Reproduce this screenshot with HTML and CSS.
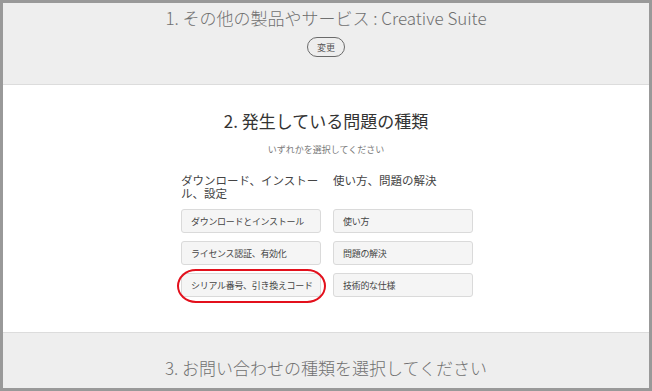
FILE: index.html
```html
<!DOCTYPE html>
<html lang="ja">
<head>
  <meta charset="UTF-8">
  <meta name="viewport" content="width=device-width, initial-scale=1.0">
  <title>お問い合わせ</title>
  <link rel="stylesheet" href="styles.css">
</head>
<body>
  <div class="frame">
    <!-- Step 1 -->
    <section class="step step-done">
      <h2 class="step-title light">1. その他の製品やサービス : Creative Suite</h2>
      <button type="button" class="change-btn">変更</button>
    </section>

    <!-- Step 2 -->
    <section class="step step-active">
      <h2 class="step-title">2. 発生している問題の種類</h2>
      <p class="hint">いずれかを選択してください</p>
      <div class="columns">
        <div class="column">
          <h3>ダウンロード、インストール、設定</h3>
          <button type="button" class="option">ダウンロードとインストール</button>
          <button type="button" class="option">ライセンス認証、有効化</button>
          <button type="button" class="option marked">シリアル番号、引き換えコード</button>
        </div>
        <div class="column">
          <h3>使い方、問題の解決</h3>
          <button type="button" class="option">使い方</button>
          <button type="button" class="option">問題の解決</button>
          <button type="button" class="option">技術的な仕様</button>
        </div>
      </div>
    </section>

    <!-- Step 3 -->
    <section class="step step-next">
      <h2 class="step-title light">3. お問い合わせの種類を選択してください</h2>
    </section>
  </div>
</body>
</html>
```

FILE: styles.css
```css
* {
  box-sizing: border-box;
}
body {
  margin: 0;
  font-family: "Noto Sans CJK JP", "Noto Sans", sans-serif;
  color: #333;
}
.frame {
  width: 652px;
  height: 391px;
  border: 3px solid #999;
  display: flex;
  flex-direction: column;
  overflow: hidden;
}
.step {
  text-align: center;
}
.step-title {
  margin: 0;
  font-size: 17px;
  line-height: 24px;
  font-weight: 400;
  color: #333;
}
.step-title.light {
  color: #707070;
  font-weight: 300;
}
.step-done {
  background-color: #eeeeee;
  height: 82px;
  padding-top: 3px;
  border-bottom: 1px solid #dcdcdc;
}
.change-btn {
  display: block;
  margin: 7px auto 0;
  height: 20px;
  width: 38px;
  padding: 0;
  border: 1.5px solid #6a6a6a;
  border-radius: 10px;
  background: transparent;
  font-family: inherit;
  font-size: 9px;
  color: #555;
}
.step-active {
  background-color: #fff;
  height: 247px;
  padding-top: 24px;
}
.hint {
  margin: 10px 0 0;
  font-size: 9px;
  line-height: 14px;
  color: #7a7a7a;
}
.columns {
  display: grid;
  grid-template-columns: 140px 140px;
  column-gap: 12px;
  justify-content: center;
  margin-top: 17px;
  transform: translateX(1px);
}
.column {
  display: flex;
  flex-direction: column;
  gap: 8px;
  text-align: left;
}
.column h3 {
  margin: 0 0 1px;
  height: 26px;
  font-size: 11.5px;
  line-height: 13px;
  font-weight: 400;
  color: #444;
}
.option {
  position: relative;
  height: 24px;
  padding: 0 9px;
  text-align: left;
  white-space: nowrap;
  background-color: #f5f5f5;
  border: 1px solid #dadada;
  border-radius: 3px;
  font-family: inherit;
  font-size: 9px;
  letter-spacing: -0.3px;
  color: #444;
}
.option.marked::after {
  content: "";
  position: absolute;
  left: -5px;
  right: -6px;
  top: -5px;
  bottom: -7px;
  border: 2px solid #e3101c;
  border-radius: 20px / 18px;
}
.step-next {
  background-color: #eeeeee;
  flex: 1;
  border-top: 1px solid #dcdcdc;
  padding-top: 23px;
}
```
